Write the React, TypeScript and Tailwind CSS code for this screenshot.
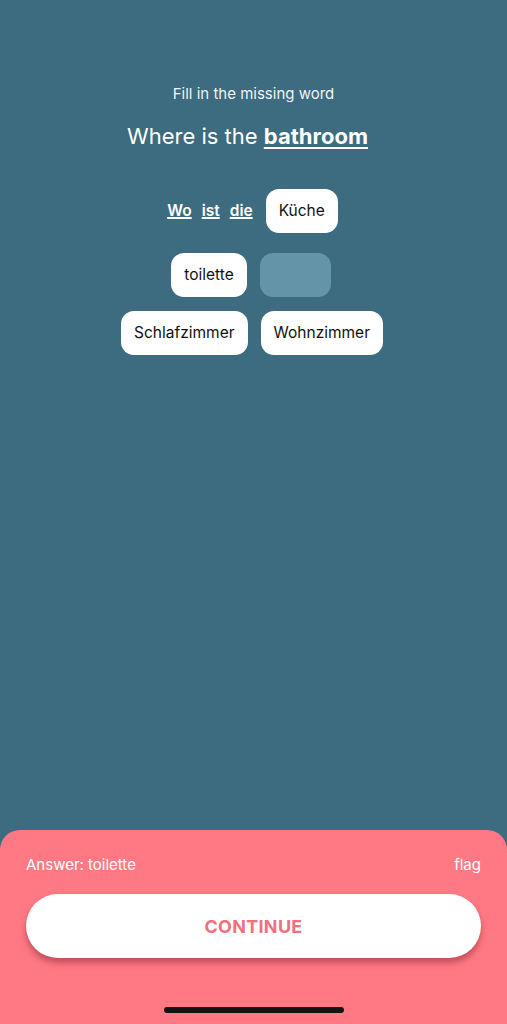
import React from "react"

const Chip = ({ label }: { label: string }) => (
  <div className="h-[44px] px-[13px] flex items-center justify-center bg-white rounded-[13px] text-[15.5px] text-[#111]">
    {label}
  </div>
)

const Slot = ({ width }: { width: string }) => (
  <div className={`h-[44px] ${width} rounded-[13px] bg-[#6494a8]`} />
)

export default function App() {
  return (
    <div
      className="relative w-full h-[1024px] bg-[#3d6b80] overflow-hidden flex flex-col"
      style={{ fontFamily: "Inter, 'Noto Sans', sans-serif" }}
    >
      <div className="flex flex-col items-center pt-[85px]">
        <p className="text-[15px] text-white/95 leading-[18px]">Fill in the missing word</p>
        <h1 className="mt-[19px] -ml-[12px] text-[22px] text-white leading-[28px]">
          Where is the <span className="font-bold underline underline-offset-[3px] decoration-2">bathroom</span>
        </h1>

        <div className="mt-[39px] flex items-center gap-[13px] -ml-[2px]">
          <div className="flex items-center gap-[10px] text-[15.5px] font-semibold text-white">
            <span className="underline underline-offset-[1px] decoration-[1.5px]">Wo</span>
            <span className="underline underline-offset-[1px] decoration-[1.5px]">ist</span>
            <span className="underline underline-offset-[1px] decoration-[1.5px]">die</span>
          </div>
          <Chip label="Küche" />
        </div>

        <div className="mt-[20px] flex items-center gap-[13px] -ml-[5px]">
          <Chip label="toilette" />
          <Slot width="w-[71px]" />
        </div>

        <div className="mt-[14px] flex items-center gap-[13px] -ml-[3px]">
          <Chip label="Schlafzimmer" />
          <Chip label="Wohnzimmer" />
        </div>
      </div>

      <div className="absolute left-0 right-0 bottom-0 h-[194px] bg-[#ff7984] rounded-t-[20px] px-[26px] pt-[26px]">
        <div className="flex items-center justify-between text-[15px] text-white leading-[18px]">
          <span>Answer: toilette</span>
          <span>flag</span>
        </div>
        <button className="mt-[20px] w-full h-[64px] rounded-full bg-white shadow-[0_5px_6px_rgba(120,30,40,0.45)] flex items-center justify-center text-[18px] font-bold tracking-[0.3px] text-[#f0707d]">
          CONTINUE
        </button>
        <div className="absolute left-[164px] bottom-[11px] w-[180px] h-[6px] rounded-full bg-[#141414]" />
      </div>
    </div>
  )
}
